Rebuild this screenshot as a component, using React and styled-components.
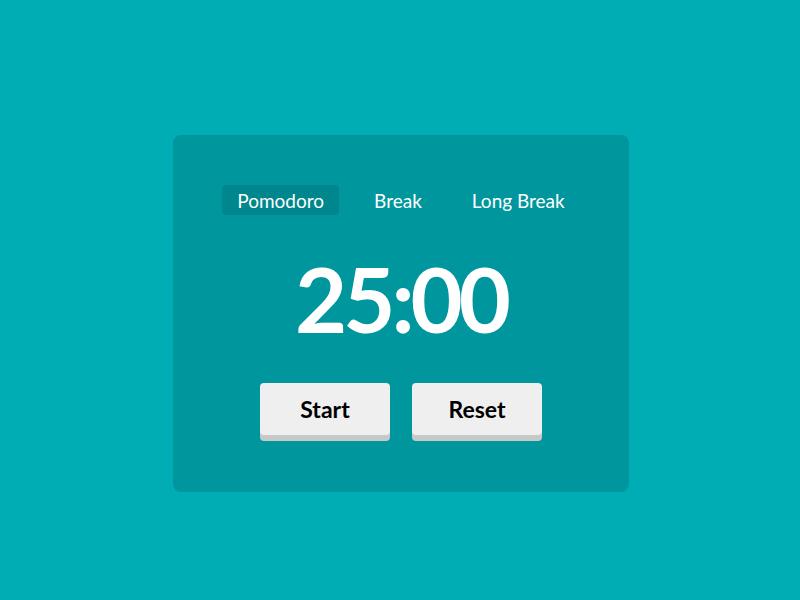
import React, { useState } from 'react';
import styled, { createGlobalStyle } from 'styled-components';

const GlobalStyle = createGlobalStyle`
  body {
    margin: 0;
    background: #00adb5;
    font-family: Lato, "Open Sans", sans-serif;
  }
`;

const Page = styled.div`
  min-height: 600px;
  display: flex;
  justify-content: center;
  align-items: flex-start;
  padding: 135px 0 0 2px;
  box-sizing: border-box;
`;

const Card = styled.div`
  width: 456px;
  height: 357px;
  box-sizing: border-box;
  background: #00969e;
  border-radius: 8px;
  padding-top: 50px;
  display: flex;
  flex-direction: column;
  align-items: center;
`;

const Tabs = styled.div`
  display: flex;
  gap: 20px;
`;

const Tab = styled.button`
  height: 30px;
  padding: 0 15px;
  border: none;
  border-radius: 4px;
  background: ${p => (p.active ? '#00868d' : 'transparent')};
  color: #fff;
  font-family: inherit;
  font-size: 19px;
  cursor: pointer;
`;

const Timer = styled.div`
  margin-top: 38px;
  color: #fff;
  font-size: 90px;
  font-weight: 700;
  line-height: 1;
  letter-spacing: -4px;
`;

const Controls = styled.div`
  display: flex;
  gap: 22px;
  margin-top: 40px;
`;

const Button = styled.button`
  width: 130px;
  height: 52px;
  border: none;
  border-radius: 4px;
  background: #efefef;
  box-shadow: 0 6px 0 #c8c8c8;
  color: #000;
  font-family: inherit;
  font-size: 23px;
  font-weight: 700;
  cursor: pointer;
`;

const modes = ['Pomodoro', 'Break', 'Long Break'];

export default function App() {
  const [mode, setMode] = useState('Pomodoro');
  return (
    <>
      <GlobalStyle />
      <Page>
        <Card>
          <Tabs>
            {modes.map(m => (
              <Tab key={m} active={m === mode} onClick={() => setMode(m)}>
                {m}
              </Tab>
            ))}
          </Tabs>
          <Timer>25:00</Timer>
          <Controls>
            <Button>Start</Button>
            <Button>Reset</Button>
          </Controls>
        </Card>
      </Page>
    </>
  );
}
